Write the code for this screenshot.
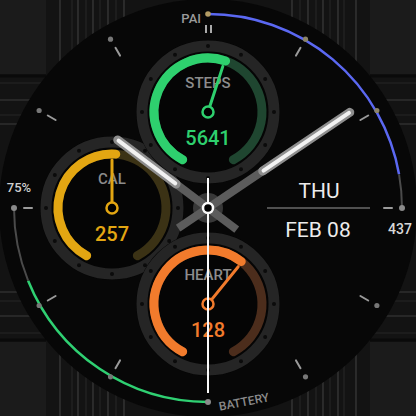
const C = 208;

// angle in degrees, clockwise from 12 o'clock
function pt(cx: number, cy: number, r: number, a: number): [number, number] {
  const t = (a * Math.PI) / 180;
  return [cx + r * Math.sin(t), cy - r * Math.cos(t)];
}

function arc(cx: number, cy: number, r: number, a1: number, a2: number) {
  const [x1, y1] = pt(cx, cy, r, a1);
  const [x2, y2] = pt(cx, cy, r, a2);
  const large = a2 - a1 > 180 ? 1 : 0;
  return `M${x1} ${y1} A${r} ${r} 0 ${large} 1 ${x2} ${y2}`;
}

function Seg({ a, r1, r2, stroke, w, cap = "round", cx = C, cy = C }: {
  a: number; r1: number; r2: number; stroke: string; w: number; cap?: "round" | "butt"; cx?: number; cy?: number;
}) {
  const [x1, y1] = pt(cx, cy, r1, a);
  const [x2, y2] = pt(cx, cy, r2, a);
  return <line x1={x1} y1={y1} x2={x2} y2={y2} stroke={stroke} strokeWidth={w} strokeLinecap={cap} />;
}

const FONT = "Roboto, 'DejaVu Sans', sans-serif";

// textured case showing in the corners, mirrored four times
function Corner() {
  const xs = [60, 72, 78, 86, 93, 100, 108, 116, 124];
  const ys = [83, 100, 115, 124];
  return (
    <g>
      <rect x={0} y={0} width={46} height={74} fill="#1b1b1b" />
      <line x1={0} y1={76} x2={46} y2={76} stroke="#0a0a0a" strokeWidth={3} />
      {xs.map((x, i) => (
        <line key={"v" + x} x1={x} y1={0} x2={x} y2={140} stroke={i % 2 === 0 ? "#3c3c3c" : "#262626"} strokeWidth={1.2} />
      ))}
      {ys.map((y, i) => (
        <line key={"h" + y} x1={0} y1={y} x2={140} y2={y} stroke={i % 2 === 1 ? "#3c3c3c" : "#262626"} strokeWidth={1.2} />
      ))}
    </g>
  );
}

interface DialProps {
  cx: number;
  cy: number;
  color: string;
  dim: string;
  end: number;
  hand: number;
  label: string;
  value: string;
}

function SubDial({ cx, cy, color, dim, end, hand, label, value }: DialProps) {
  const [hx, hy] = pt(cx, cy, 48, hand);
  const [sx, sy] = pt(cx, cy, 6, hand);
  return (
    <g>
      <circle cx={cx} cy={cy} r={72} fill="#050505" />
      <circle cx={cx} cy={cy} r={66} fill="none" stroke="#252525" strokeWidth={11} />
      {Array.from({ length: 12 }, (_, i) => {
        const [x, y] = pt(cx, cy, 66, i * 30);
        return <circle key={i} cx={x} cy={y} r={2} fill="#0b0b0b" />;
      })}
      <path d={arc(cx, cy, 54, 208, 512)} fill="none" stroke={dim} strokeWidth={9} strokeLinecap="round" />
      <path d={arc(cx, cy, 54, 208, end + 360)} fill="none" stroke={color} strokeWidth={9} strokeLinecap="round" />
      <text x={cx} y={cy - 24} textAnchor="middle" fontFamily={FONT} fontSize={15} fontWeight={500} fill="#8c8c8c">
        {label}
      </text>
      <text x={cx} y={cy + 33} textAnchor="middle" fontFamily={FONT} fontSize={20} fontWeight={500} fill={color}>
        {value}
      </text>
      <line x1={sx} y1={sy} x2={hx} y2={hy} stroke={color} strokeWidth={3} strokeLinecap="round" />
      <circle cx={cx} cy={cy} r={5.5} fill="#000" stroke={color} strokeWidth={2.5} />
    </g>
  );
}

function MainHand({ angle, len, start }: { angle: number; len: number; start: number }) {
  return (
    <g>
      <Seg a={angle} r1={-36} r2={start + 4} stroke="#5c5c5c" w={8} cap="butt" />
      <Seg a={angle} r1={start} r2={len} stroke="#8e8e8e" w={9} />
      <Seg a={angle} r1={start + 1} r2={len - 1} stroke="#f2f2f2" w={4} />
    </g>
  );
}

export default function App() {
  const ticks = [30, 60, 120, 150, 210, 240, 300, 330];
  return (
    <div className="w-[416px] h-[416px] bg-[#131313] overflow-hidden">
      <svg width={416} height={416} viewBox="0 0 416 416" className="block">
        <rect width={416} height={416} fill="#131313" />
        <Corner />
        <g transform="translate(416 0) scale(-1 1)"><Corner /></g>
        <g transform="translate(0 416) scale(1 -1)"><Corner /></g>
        <g transform="translate(416 416) scale(-1 -1)"><Corner /></g>

        <circle cx={C} cy={C} r={209} fill="#070707" />

        {/* outer tracks */}
        <path d={arc(C, C, 194, 0, 80)} fill="none" stroke="#5b68f2" strokeWidth={2.5} />
        <path d={arc(C, C, 194, 80, 90)} fill="none" stroke="#4a4a4a" strokeWidth={2} />
        <path d={arc(C, C, 194, 180, 248)} fill="none" stroke="#2fd072" strokeWidth={2.5} />
        <path d={arc(C, C, 194, 248, 270)} fill="none" stroke="#4a4a4a" strokeWidth={2} />

        {ticks.map((a) => (
          <Seg key={a} a={a} r1={176} r2={185} stroke="#9a9a9a" w={2} />
        ))}
        <Seg a={90} r1={176} r2={184} stroke="#9a9a9a" w={2} />
        <Seg a={270} r1={176} r2={184} stroke="#9a9a9a" w={2} />
        <line x1={206} y1={25} x2={206} y2={33} stroke="#aaa" strokeWidth={2} />
        <line x1={211} y1={25} x2={211} y2={33} stroke="#aaa" strokeWidth={2} />

        {ticks.map((a) => {
          const [x, y] = pt(C, C, 195, a);
          return <circle key={a} cx={x} cy={y} r={2.6} fill={a < 90 ? "#8c8468" : "#777"} />;
        })}
        <circle cx={208} cy={14} r={2.8} fill="#b49c64" />
        <circle cx={402} cy={208} r={3} fill="#8a8a8a" />
        <circle cx={14} cy={208} r={3} fill="#8a8a8a" />
        <circle cx={208} cy={402} r={3} fill="#8a8a8a" />

        <text x={201} y={23} textAnchor="end" fontFamily={FONT} fontSize={13} fontWeight={500} fill="#9a9a9a">PAI</text>
        <text x={19} y={192} textAnchor="middle" fontFamily={FONT} fontSize={13} fontWeight={500} fill="#d0d0d0">75%</text>
        <text x={400} y={234} textAnchor="middle" fontFamily={FONT} fontSize={14} fontWeight={500} fill="#d8d8d8">437</text>
        <text x={244} y={406} textAnchor="middle" fontFamily={FONT} fontSize={12} fontWeight={500} fill="#8a8a8a" transform="rotate(-11 244 402)">BATTERY</text>

        <SubDial cx={112} cy={208} color="#e3a612" dim="#3b3215" end={4} hand={0} label="CAL" value="257" />
        <SubDial cx={208} cy={304} color="#f27b2c" dim="#4c2d1c" end={38} hand={39} label="HEART" value="128" />
        <SubDial cx={208} cy={112} color="#2ed06e" dim="#1f4630" end={19} hand={18} label="STEPS" value="5641" />

        <text x={319} y={198} textAnchor="middle" fontFamily={FONT} fontSize={21} fill="#ececec">THU</text>
        <line x1={267} y1={208} x2={370} y2={208} stroke="#6a6a6a" strokeWidth={1.5} />
        <text x={318} y={237} textAnchor="middle" fontFamily={FONT} fontSize={21} fill="#ececec">FEB 08</text>

        {/* hands */}
        <circle cx={C} cy={C} r={15} fill="#383838" />
        <MainHand angle={307} len={113} start={40} />
        <MainHand angle={56} len={171} start={66} />
        <line x1={208} y1={178} x2={208} y2={393} stroke="#fafafa" strokeWidth={2} />
        <circle cx={C} cy={C} r={5} fill="#000" stroke="#fafafa" strokeWidth={2.5} />
      </svg>
    </div>
  );
}
